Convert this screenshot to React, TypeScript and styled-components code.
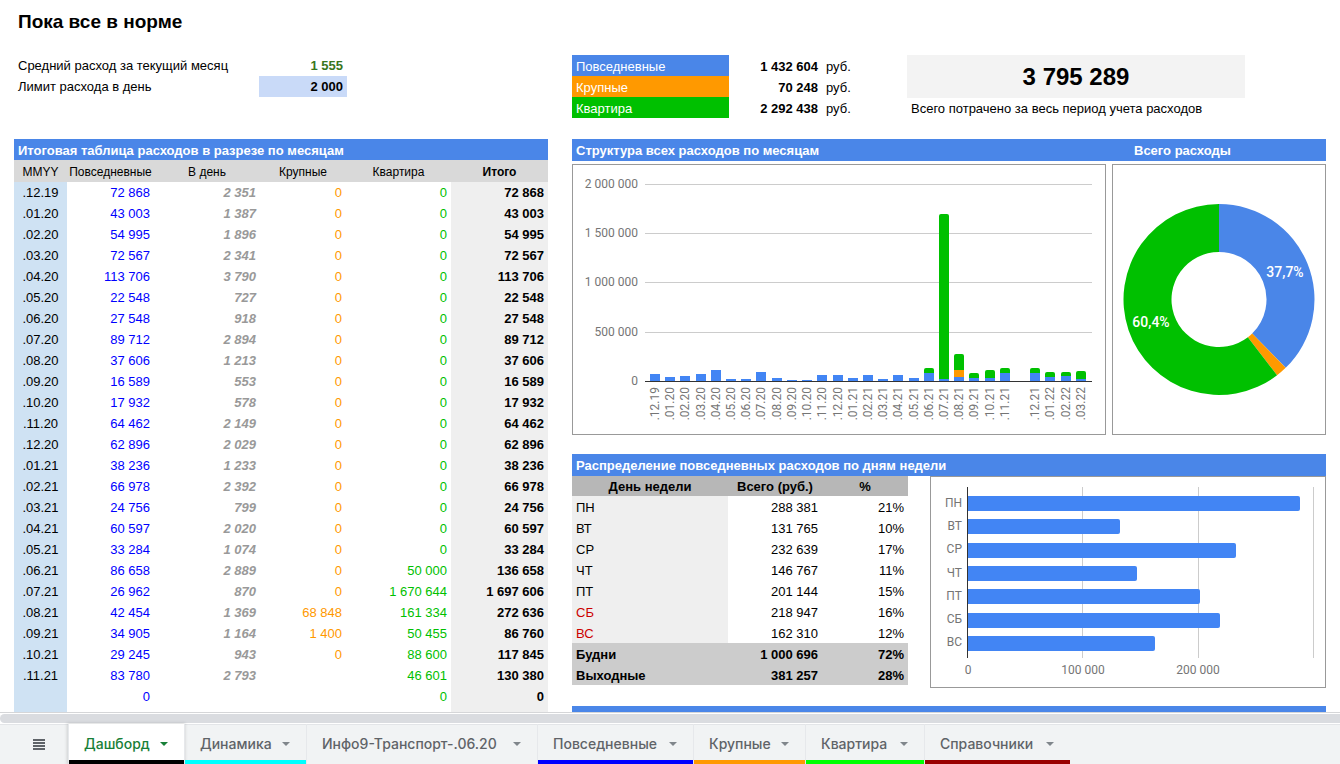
import React from "react";
import styled, { createGlobalStyle } from "styled-components";

const BLUE = "#4a86e8";
const ORANGE = "#ff9900";
const GREEN = "#00c000";
const CHART_BLUE = "#4285f4";

const GlobalStyle = createGlobalStyle`
  * { box-sizing: border-box; }
  body { margin: 0; background: #fff; color: #000; font: 13px/21px "Liberation Sans", Arial, sans-serif; }
  table { border-collapse: collapse; border-spacing: 0; table-layout: fixed; width: 100%; }
  th, td { padding: 2px 4px 0; height: 21px; line-height: 19px; white-space: nowrap; }
`;

const Page = styled.div`
  display: flex;
  flex-direction: column;
  height: 100vh;
`;

const Sheet = styled.main`
  flex: 1;
  min-height: 0;
  overflow: hidden;
  display: grid;
  grid-template-columns: 534fr 754fr;
  grid-template-rows: 139px auto;
  column-gap: 24px;
  padding: 0 14px;
`;

const Summary = styled.section`
  display: flex;
  flex-direction: column;
`;

const Title = styled.h1`
  margin: 0;
  padding: 8px 4px 0;
  height: 55px;
  font-size: 19px;
  line-height: 27px;
`;

const Metric = styled.div`
  display: grid;
  grid-template-columns: 245px 88px;
  height: 21px;
  & > :first-child { padding-left: 4px; }
`;

const MetricValue = styled.output`
  padding: 0 4px;
  text-align: right;
  font-weight: bold;
  color: #38761d;
`;

const LimitInput = styled.input`
  width: 100%;
  height: 21px;
  padding: 0 4px;
  border: 0;
  outline: 0;
  background: #c9daf8;
  font: inherit;
  font-weight: bold;
  text-align: right;
`;

const Totals = styled.section`
  display: grid;
  grid-template-columns: 335fr 338fr 81fr;
  align-items: start;
  padding-top: 55px;
`;

const LegendName = styled.th<{ $color: string }>`
  background: ${(p) => p.$color};
  color: #fff;
  font-weight: normal;
  text-align: left;
`;

const Cell = styled.td<{ $bold?: boolean; $left?: boolean }>`
  text-align: ${(p) => (p.$left ? "left" : "right")};
  font-weight: ${(p) => (p.$bold ? "bold" : "normal")};
`;

const GrandTotal = styled.div`
  height: 43px;
  background: #f3f3f3;
  font-size: 24px;
  line-height: 43px;
  font-weight: bold;
  text-align: center;
`;

const GrandCaption = styled.div`
  padding-left: 4px;
  white-space: nowrap;
`;

const Bar = styled.h2<{ $tall?: boolean }>`
  display: grid;
  grid-template-columns: 558fr 192fr;
  margin: 0;
  padding: 1px 0 0 4px;
  height: ${(p) => (p.$tall ? 22 : 21)}px;
  background: ${BLUE};
  color: #fff;
  font-size: 13px;
  line-height: 21px;
  font-weight: bold;
  white-space: nowrap;
`;

const MonthHead = styled.th<{ $bold?: boolean }>`
  background: #d9d9d9;
  padding: 2px 0 0;
  height: 22px;
  font-size: 12px;
  line-height: 20px;
  font-weight: ${(p) => (p.$bold ? "bold" : "normal")};
`;

type Kind = "date" | "daily" | "perDay" | "large" | "flat" | "total";
const kindStyle: Record<Kind, string> = {
  date: "background: #cfe2f3; text-align: center;",
  daily: "color: #0000ff;",
  perDay: "color: #999999; font-weight: bold; font-style: italic;",
  large: "color: #ff9900;",
  flat: "color: #00c000;",
  total: "background: #efefef; font-weight: bold;",
};

const MonthCell = styled.td<{ $kind: Kind }>`
  padding-top: 0;
  line-height: 21px;
  text-align: right;
  ${(p) => kindStyle[p.$kind]}
`;

const Charts = styled.div`
  display: grid;
  grid-template-columns: 534fr 214fr;
  gap: 6px;
  margin: 3px 0 19px;
`;

const Weekly = styled.div`
  display: grid;
  grid-template-columns: 336fr 396fr;
  gap: 22px;
  align-items: start;
  margin-bottom: 18px;
`;

const ChartBox = styled.figure`
  margin: 0;
  border: 1px solid #999;
  background: #fff;
`;

const ChartSvg = styled.svg`
  display: block;
  width: 100%;
  font-family: Roboto, sans-serif;
  font-size: 12px;
  fill: #757575;
`;

const WeekHead = styled.th`
  height: 20px;
  padding-top: 1px;
  background: #b7b7b7;
`;

const DayName = styled.th<{ $weekend?: boolean }>`
  background: #efefef;
  color: ${(p) => (p.$weekend ? "#cc0000" : "#000")};
  font-weight: normal;
  text-align: left;
`;

const SumRow = styled.tr`
  background: #ccc;
  font-weight: bold;
  th { text-align: left; }
`;

const ScrollTrack = styled.div`
  flex: none;
  height: 12px;
  border-top: 1px solid #d5d6d8;
  padding: 1px 0;
`;

const ScrollThumb = styled.div`
  height: 9px;
  border-radius: 5px 0 0 5px;
  background: #dadce0;
`;

const TabBar = styled.nav`
  flex: none;
  display: flex;
  height: 40px;
  padding-left: 10px;
  background: #f1f3f4;
  box-shadow: inset 0 1px 0 #e3e5e8;
`;

const MenuButton = styled.button`
  width: 58px;
  padding: 0;
  border: 0;
  background: none;
  display: flex;
  align-items: center;
  justify-content: center;
`;

const Tab = styled.button<{ $line: string; $width: number; $active?: boolean }>`
  display: grid;
  grid-template: 36px 4px / 1fr 8px;
  column-gap: 10px;
  align-items: center;
  min-width: ${(p) => p.$width}px;
  padding: 0 16px 0 0;
  border: 0;
  border-left: 1px solid #e6e8eb;
  background: linear-gradient(${(p) => p.$line}, ${(p) => p.$line}) bottom / 100% 4px no-repeat
    ${(p) => (p.$active ? "#fff" : "transparent")};
  box-shadow: ${(p) => (p.$active ? "0 0 3px 1px rgba(60, 64, 67, 0.2)" : "none")};
  color: ${(p) => (p.$active ? "#188038" : "#5f6368")};
  font: 500 14px/20px Inter, Roboto, sans-serif;
  text-align: left;
  white-space: nowrap;

  & > span { padding: 4px 0 0 15px; }
  & > svg { margin-top: 3px; }
`;

const months: string[][] = [
  [".12.19", "72 868", "2 351", "0", "0", "72 868"],
  [".01.20", "43 003", "1 387", "0", "0", "43 003"],
  [".02.20", "54 995", "1 896", "0", "0", "54 995"],
  [".03.20", "72 567", "2 341", "0", "0", "72 567"],
  [".04.20", "113 706", "3 790", "0", "0", "113 706"],
  [".05.20", "22 548", "727", "0", "0", "22 548"],
  [".06.20", "27 548", "918", "0", "0", "27 548"],
  [".07.20", "89 712", "2 894", "0", "0", "89 712"],
  [".08.20", "37 606", "1 213", "0", "0", "37 606"],
  [".09.20", "16 589", "553", "0", "0", "16 589"],
  [".10.20", "17 932", "578", "0", "0", "17 932"],
  [".11.20", "64 462", "2 149", "0", "0", "64 462"],
  [".12.20", "62 896", "2 029", "0", "0", "62 896"],
  [".01.21", "38 236", "1 233", "0", "0", "38 236"],
  [".02.21", "66 978", "2 392", "0", "0", "66 978"],
  [".03.21", "24 756", "799", "0", "0", "24 756"],
  [".04.21", "60 597", "2 020", "0", "0", "60 597"],
  [".05.21", "33 284", "1 074", "0", "0", "33 284"],
  [".06.21", "86 658", "2 889", "0", "50 000", "136 658"],
  [".07.21", "26 962", "870", "0", "1 670 644", "1 697 606"],
  [".08.21", "42 454", "1 369", "68 848", "161 334", "272 636"],
  [".09.21", "34 905", "1 164", "1 400", "50 455", "86 760"],
  [".10.21", "29 245", "943", "0", "88 600", "117 845"],
  [".11.21", "83 780", "2 793", "", "46 601", "130 380"],
  ["", "0", "", "", "0", "0"],
  ["", "", "", "", "", ""],
];

const kinds: Kind[] = ["date", "daily", "perDay", "large", "flat", "total"];

const weekdays = [
  { name: "ПН", total: "288 381", share: "21%" },
  { name: "ВТ", total: "131 765", share: "10%" },
  { name: "СР", total: "232 639", share: "17%" },
  { name: "ЧТ", total: "146 767", share: "11%" },
  { name: "ПТ", total: "201 144", share: "15%" },
  { name: "СБ", total: "218 947", share: "16%", weekend: true },
  { name: "ВС", total: "162 310", share: "12%", weekend: true },
];

const toNumber = (s: string) => Number(s.replace(/\s/g, "")) || 0;

type Stack = { label: string; parts: number[] };
const stacks: Stack[] = [
  ...months.slice(0, 24).map((m) => ({
    label: m[0],
    parts: [toNumber(m[1]), toNumber(m[3]), toNumber(m[4])],
  })),
  { label: "", parts: [0, 0, 0] },
  { label: ".12.21", parts: [84000, 0, 50000] },
  { label: ".01.22", parts: [42000, 0, 50000] },
  { label: ".02.22", parts: [52000, 0, 40000] },
  { label: ".03.22", parts: [21000, 0, 82000] },
];

const StackedChart = () => {
  const base = 216;
  const line = (v: number) => base - Math.round((v * 197) / 2000000);
  const level = (v: number) => base - Math.floor((v * 197) / 2000000 + 0.2);
  return (
    <ChartSvg viewBox="0 0 532 269" role="img" aria-label="Структура всех расходов по месяцам">
      {[2000000, 1500000, 1000000, 500000, 0].map((v) => (
        <g key={v}>
          {v > 0 && <rect x="72" y={line(v)} width="447" height="1" fill="#ccc" />}
          <text x="65" y={line(v) + 4} textAnchor="end">
            {v.toLocaleString("en-US").replace(/,/g, " ")}
          </text>
        </g>
      ))}
      {stacks.map((s, i) => {
        const x = Math.round(77 + i * 15.21);
        const [a, b, c] = s.parts;
        const y1 = level(a);
        const y2 = level(a + b);
        const y3 = level(a + b + c);
        return (
          <g key={i}>
            <rect x={x} y={y1} width="10" height={base - y1} fill={CHART_BLUE} />
            {y2 < y1 && <rect x={x} y={y2} width="10" height={y1 - y2} fill={ORANGE} />}
            {y3 < y2 && (
              <path d={`M${x} ${y2}V${y3 + 2}q0-2 2-2h6q2 0 2 2V${y2}z`} fill={GREEN} />
            )}
            <text transform={`translate(${x + 9} 222) rotate(-90)`} textAnchor="end">
              {s.label}
            </text>
          </g>
        );
      })}
      <rect x="72" y={base} width="447" height="1" fill="#333" />
    </ChartSvg>
  );
};

const point = (r: number, share: number) => {
  const t = share * Math.PI * 2;
  return `${106 + r * Math.sin(t)} ${134.5 - r * Math.cos(t)}`;
};

const slice = (from: number, to: number) => {
  const large = to - from > 0.5 ? 1 : 0;
  return `M${point(95.5, from)}A95.5 95.5 0 ${large} 1 ${point(95.5, to)}L${point(47.5, to)}A47.5 47.5 0 ${large} 0 ${point(47.5, from)}Z`;
};

const Donut = () => (
  <ChartSvg viewBox="0 0 212 269" role="img" aria-label="Всего расходы">
    <path d={slice(0, 0.377)} fill={BLUE} />
    <path d={slice(0.377, 0.396)} fill={ORANGE} />
    <path d={slice(0.396, 1)} fill={GREEN} />
    <g fill="#fff" fontSize="14" fontWeight="500" textAnchor="middle">
      <text x="172" y="112">37,7%</text>
      <text x="38" y="162">60,4%</text>
    </g>
  </ChartSvg>
);

const WeekChart = () => (
  <ChartSvg viewBox="0 0 394 210" role="img" aria-label="Распределение повседневных расходов по дням недели">
    {[151, 267, 382].map((x) => (
      <rect key={x} x={x} y="10" width="1" height="171" fill="#ccc" />
    ))}
    {weekdays.map((d, i) => {
      const y = Math.round(19 + i * 23.3);
      const end = 36 + Math.ceil((toNumber(d.total) * 115.4) / 100000);
      return (
        <g key={d.name}>
          <path d={`M37 ${y}H${end - 2}q2 0 2 2v11q0 2-2 2H37z`} fill={CHART_BLUE} />
          <text x="31" y={Math.round(30 + i * 23.2)} textAnchor="end">
            {d.name}
          </text>
        </g>
      );
    })}
    <rect x="36" y="10" width="1" height="171" fill="#333" />
    <g textAnchor="middle">
      <text x="37" y="197">0</text>
      <text x="152" y="197">100 000</text>
      <text x="267" y="197">200 000</text>
    </g>
  </ChartSvg>
);

const tabs = [
  { name: "Дашборд", line: "#000000", width: 116, active: true },
  { name: "Динамика", line: "#00ffff", width: 122 },
  { name: "Инфо9-Транспорт-.06.20", line: "transparent", width: 231 },
  { name: "Повседневные", line: "#0000ff", width: 156 },
  { name: "Крупные", line: "#ff9900", width: 112 },
  { name: "Квартира", line: "#00ff00", width: 119 },
  { name: "Справочники", line: "#990000", width: 146 },
];

const Widths = ({ list }: { list: number[] }) => {
  const sum = list.reduce((a, b) => a + b, 0);
  return (
    <colgroup>
      {list.map((w, i) => (
        <col key={i} style={{ width: `${(w / sum) * 100}%` }} />
      ))}
    </colgroup>
  );
};

const legend = [
  { name: "Повседневные", color: BLUE, total: "1 432 604" },
  { name: "Крупные", color: ORANGE, total: "70 248" },
  { name: "Квартира", color: GREEN, total: "2 292 438" },
];

export default function App() {
  return (
    <Page>
      <GlobalStyle />
      <Sheet>
        <Summary>
          <Title>Пока все в норме</Title>
          <Metric>
            <span>Средний расход за текущий месяц</span>
            <MetricValue>1 555</MetricValue>
          </Metric>
          <Metric>
            <label htmlFor="limit">Лимит расхода в день</label>
            <LimitInput id="limit" defaultValue="2 000" />
          </Metric>
        </Summary>

        <Totals>
          <table>
            <Widths list={[157, 93, 85]} />
            <tbody>
              {legend.map((l) => (
                <tr key={l.name}>
                  <LegendName scope="row" $color={l.color}>{l.name}</LegendName>
                  <Cell $bold>{l.total}</Cell>
                  <Cell $left>руб.</Cell>
                </tr>
              ))}
            </tbody>
          </table>
          <div>
            <GrandTotal>3 795 289</GrandTotal>
            <GrandCaption>Всего потрачено за весь период учета расходов</GrandCaption>
          </div>
        </Totals>

        <section>
          <Bar>Итоговая таблица расходов в разрезе по месяцам</Bar>
          <table>
            <Widths list={[53, 87, 106, 86, 105, 97]} />
            <thead>
              <tr>
                {["MMYY", "Повседневные", "В день", "Крупные", "Квартира", "Итого"].map((h) => (
                  <MonthHead key={h} scope="col" $bold={h === "Итого"}>{h}</MonthHead>
                ))}
              </tr>
            </thead>
            <tbody>
              {months.map((row, r) => (
                <tr key={r}>
                  {row.map((value, c) => (
                    <MonthCell key={c} $kind={kinds[c]}>{value}</MonthCell>
                  ))}
                </tr>
              ))}
            </tbody>
          </table>
        </section>

        <section>
          <Bar $tall>
            <span>Структура всех расходов по месяцам</span>
            <span>Всего расходы</span>
          </Bar>
          <Charts>
            <ChartBox><StackedChart /></ChartBox>
            <ChartBox><Donut /></ChartBox>
          </Charts>
          <Bar $tall>Распределение повседневных расходов по дням недели</Bar>
          <Weekly>
            <table>
              <Widths list={[156, 94, 86]} />
              <thead>
                <tr>
                  <WeekHead scope="col">День недели</WeekHead>
                  <WeekHead scope="col">Всего (руб.)</WeekHead>
                  <WeekHead scope="col">%</WeekHead>
                </tr>
              </thead>
              <tbody>
                {weekdays.map((d) => (
                  <tr key={d.name}>
                    <DayName scope="row" $weekend={d.weekend}>{d.name}</DayName>
                    <Cell>{d.total}</Cell>
                    <Cell>{d.share}</Cell>
                  </tr>
                ))}
                <SumRow>
                  <th scope="row">Будни</th>
                  <Cell $bold>1 000 696</Cell>
                  <Cell $bold>72%</Cell>
                </SumRow>
                <SumRow>
                  <th scope="row">Выходные</th>
                  <Cell $bold>381 257</Cell>
                  <Cell $bold>28%</Cell>
                </SumRow>
              </tbody>
            </table>
            <ChartBox><WeekChart /></ChartBox>
          </Weekly>
          <Bar as="div" />
        </section>
      </Sheet>

      <ScrollTrack>
        <ScrollThumb />
      </ScrollTrack>
      <TabBar>
        <MenuButton type="button" aria-label="Все листы">
          <svg width="12" height="11" viewBox="0 0 12 11" fill="#5f6368">
            <path d="M0 0h12v2H0zM0 3h12v2H0zM0 6h12v2H0zM0 9h12v2H0z" />
          </svg>
        </MenuButton>
        {tabs.map((t) => (
          <Tab key={t.name} type="button" $line={t.line} $width={t.width} $active={t.active}>
            <span>{t.name}</span>
            <svg width="8" height="4" viewBox="0 0 8 4" fill={t.active ? "#188038" : "#80868b"}>
              <path d="M0 0h8L4 4z" />
            </svg>
          </Tab>
        ))}
      </TabBar>
    </Page>
  );
}
